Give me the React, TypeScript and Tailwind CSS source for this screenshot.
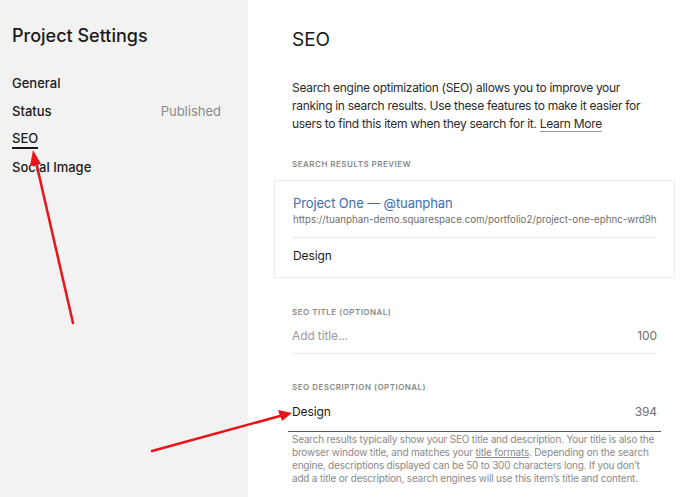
import React from "react";

const font = { fontFamily: "Inter, 'Liberation Sans', sans-serif" };

const navItems = [
  { label: "General" },
  { label: "Status", value: "Published" },
  { label: "SEO", active: true },
  { label: "Social Image" },
];

const Sidebar = () => (
  <aside className="w-[248px] shrink-0 bg-[#f2f2f2] pl-3 pr-[27px] pt-[25px]">
    <h1 className="text-[18px] font-medium text-[#1a1a1a] leading-[22px]">
      Project Settings
    </h1>
    <nav className="mt-[27px] flex flex-col gap-[9px]">
      {navItems.map((item) => (
        <div
          key={item.label}
          className="flex items-center justify-between h-[19px] text-[13px] font-medium text-[#1a1a1a]"
        >
          <span
            className={
              item.active ? "border-b-2 border-[#1a1a1a] leading-[17px]" : ""
            }
          >
            {item.label}
          </span>
          {item.value && (
            <span className="font-normal text-[#8a8a8a]">{item.value}</span>
          )}
        </div>
      ))}
    </nav>
  </aside>
);

const Label = ({ children }: { children: React.ReactNode }) => (
  <div className="text-[8px] font-semibold tracking-[0.06em] uppercase text-[#8a8a8a]">
    {children}
  </div>
);

const Main = () => (
  <main className="flex-1 bg-white pl-[44px] pt-[28px]">
    <div className="w-[365px]">
      <h2 className="text-[19px] text-[#1a1a1a] leading-[24px]">SEO</h2>
      <p className="mt-[27px] text-[12px] tracking-[-0.025em] leading-[18px] text-[#2b2b2b]">
        Search engine optimization (SEO) allows you to improve your ranking in
        search results. Use these features to make it easier for users to find
        this item when they search for it.{" "}
        <span className="border-b border-[#9a9a9a]">Learn More</span>
      </p>
      <div className="mt-[25px]">
        <Label>Search Results Preview</Label>
      </div>
      <div className="mt-[10px] -mx-[18px] border border-[#ececec] px-[18px] pt-[13px] pb-[12px]">
        <div className="text-[13px] tracking-[-0.01em] leading-[18px] text-[#3c6eb4]">
          Project One — @tuanphan
        </div>
        <div className="text-[9.75px] leading-[16px] text-[#6e6e6e] whitespace-nowrap">
          https://tuanphan-demo.squarespace.com/portfolio2/project-one-ephnc-wrd9h
        </div>
        <div className="mt-[9px] border-t border-[#ececec]" />
        <div className="mt-[9px] text-[12px] tracking-[-0.01em] leading-[18px] text-[#1a1a1a]">
          Design
        </div>
      </div>
      <div className="mt-[28px]">
        <Label>SEO Title (Optional)</Label>
      </div>
      <div className="mt-[9px] flex justify-between border-b border-[#ececec] pb-[8px] text-[12px] tracking-[-0.01em] leading-[18px]">
        <span className="text-[#9a9a9a]">Add title...</span>
        <span className="text-[#6e6e6e]">100</span>
      </div>
      <div className="mt-[27px]">
        <Label>SEO Description (Optional)</Label>
      </div>
      <div className="mt-[10px] -mx-[4px] flex justify-between border-b border-[#5a5a5a] px-[4px] pb-[10px] text-[12px] tracking-[-0.01em] leading-[18px]">
        <span className="text-[#1a1a1a]">Design</span>
        <span className="text-[#6e6e6e]">394</span>
      </div>
      <p className="mt-[1px] text-[10px] tracking-[-0.02em] leading-[13px] text-[#8a8a8a]">
        Search results typically show your SEO title and description. Your
        title is also the browser window title, and matches your{" "}
        <span className="underline">title formats</span>. Depending on the
        search engine, descriptions displayed can be 50 to 300 characters long.
        If you don’t add a title or description, search engines will use this
        item’s title and content.
      </p>
    </div>
  </main>
);

// red annotation arrows drawn over the screenshot
const Arrows = () => (
  <svg
    className="absolute inset-0 pointer-events-none"
    width="700"
    height="497"
    viewBox="0 0 700 497"
  >
    <g stroke="#e8141a" strokeWidth="2.5" strokeLinecap="round" fill="none">
      <line x1="73" y1="323" x2="36" y2="162" />
      <line x1="152" y1="451" x2="280" y2="416" />
    </g>
    <g fill="#e8141a">
      <polygon points="33,150 30,166 41,164" />
      <polygon points="292,413 278,410 282,421" />
    </g>
  </svg>
);

export default function App() {
  return (
    <div
      className="relative flex w-[700px] h-[497px] overflow-hidden"
      style={font}
    >
      <Sidebar />
      <Main />
      <Arrows />
    </div>
  );
}
